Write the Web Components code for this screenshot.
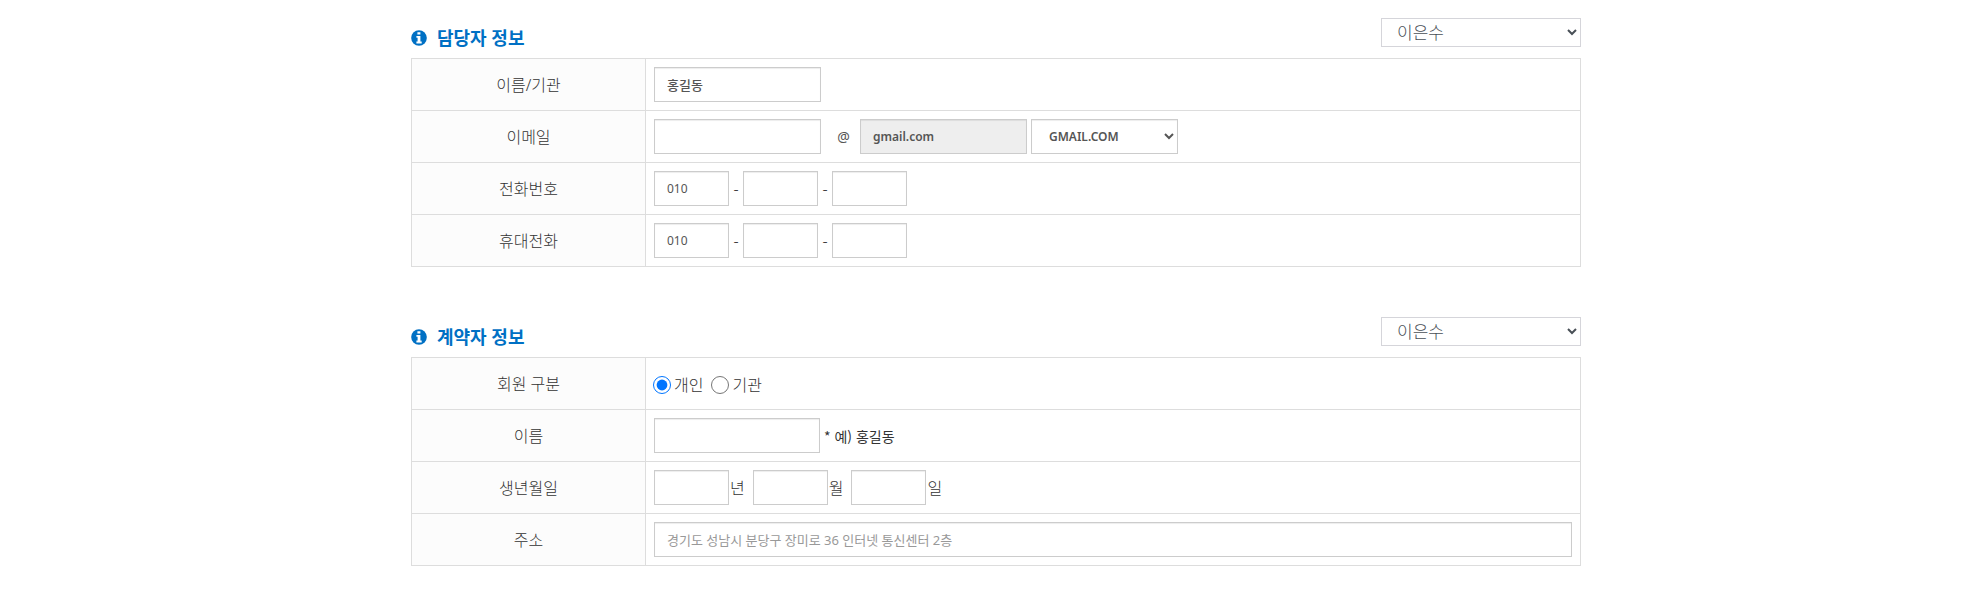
<!DOCTYPE html>
<html lang="ko">
<head>
<meta charset="utf-8">
<meta name="viewport" content="width=device-width, initial-scale=1">
<title>담당자 / 계약자 정보</title>
<style>
body {
  margin: 0;
  padding: 18px 0 40px 22px;
  background: #fff;
  color: #333;
  font: 16px/24px "Noto Sans", "Noto Sans CJK KR", sans-serif;
}
</style>
</head>
<body>
<contract-page></contract-page>

<script>
const controls = `
  *, *::before, *::after { box-sizing: border-box; }
  input, select { font-family: inherit; margin: 0; }
  input[type="text"], select {
    height: 35px;
    border: 1px solid #ccc;
    border-radius: 0;
    background-color: #fff;
    box-shadow: inset 0 1px 1px rgba(0, 0, 0, .075);
    color: #555;
    font-size: 13px;
    outline: 0;
  }
  input[type="text"] { width: 167px; padding: 0 12px; }
  input::placeholder { color: #999; opacity: 1; }
  input.short { width: 75px; font-size: 12px; }
`;

function define(name, markup, setup) {
  const template = document.createElement('template');
  template.innerHTML = markup;
  customElements.define(name, class extends HTMLElement {
    constructor() {
      super();
      this.attachShadow({ mode: 'open' }).append(template.content.cloneNode(true));
    }
    connectedCallback() {
      if (setup) setup(this, this.shadowRoot);
    }
  });
}

define('info-icon', `
  <style>
    :host { display: block; width: 16px; height: 16px; }
    svg { display: block; width: 100%; height: 100%; }
  </style>
  <svg viewBox="0 0 16 16" aria-hidden="true">
    <circle cx="8" cy="8" r="7.8" fill="#0070c4"/>
    <path fill="#fff" d="M6.4 2.2h3v2.4h-3zM5.4 6h4v5.6h1.3v1.8H5.4v-1.8h1.2V7.8H5.4z"/>
  </svg>
`);

define('person-select', `
  <style>${controls}
    :host { display: block; width: 200px; }
    select { display: block; width: 100%; height: 29px; padding: 0 0 0 11px; font-size: 17px; font-weight: 300; border-color: #d5d5da; box-shadow: none; color: #495057; }
  </style>
  <select><option>이은수</option></select>
`, (host, root) => root.querySelector('select').setAttribute('aria-label', host.getAttribute('label')));

define('info-section', `
  <style>
    :host { display: block; }
    header { display: flex; justify-content: space-between; align-items: flex-start; height: 40px; }
    .title { display: flex; align-items: center; gap: 10px; height: 40px; color: #0070c4; }
    h2 { margin: 0; font-size: 18px; line-height: 38px; font-weight: 700; }
  </style>
  <section>
    <header>
      <div class="title"><info-icon></info-icon><h2><slot name="title"></slot></h2></div>
      <slot name="picker"></slot>
    </header>
    <slot></slot>
  </section>
`);

define('phone-fields', `
  <style>${controls}
    :host { display: flex; align-items: center; }
    span { width: 14px; text-align: center; }
  </style>
  <input class="short" type="text" value="010"><span>-</span>
  <input class="short" type="text"><span>-</span>
  <input class="short" type="text">
`, (host, root) => root.querySelectorAll('input').forEach((input, i) =>
  input.setAttribute('aria-label', host.getAttribute('label') + ' ' + (i + 1))));

const tableStyle = `
  :host { display: block; }
  table { width: 100%; border-collapse: collapse; table-layout: fixed; }
  tr { height: 52px; }
  th, td { border: 1px solid #ddd; padding: 0 8px; }
  th { width: 234px; background: #fcfcfc; font-weight: 300; text-align: center; }
  td { font-weight: 300; }
  .row { display: flex; align-items: center; }
`;

define('manager-form', `
  <style>${controls}${tableStyle}
    .name { font-weight: 500; }
    input.domain, select.provider { font-size: 12px; font-weight: 600; }
    .at { width: 39px; padding-left: 6px; text-align: center; font-size: 14px; font-weight: 400; color: #555; }
    .domain:disabled { background: #eee; }
    .provider { width: 147px; margin-left: 4px; padding: 0 0 0 13px; }
  </style>
  <table>
    <tr><th scope="row"><label for="name">이름/기관</label></th>
      <td><div class="row"><input class="name" id="name" type="text" value="홍길동"></div></td></tr>
    <tr><th scope="row"><label for="email">이메일</label></th>
      <td><div class="row"><input id="email" type="text"><span class="at">@</span><input class="domain" type="text" value="gmail.com" aria-label="이메일 도메인" disabled><select class="provider" aria-label="도메인 선택"><option>GMAIL.COM</option></select></div></td></tr>
    <tr><th scope="row">전화번호</th><td><phone-fields label="전화번호"></phone-fields></td></tr>
    <tr><th scope="row">휴대전화</th><td><phone-fields label="휴대전화"></phone-fields></td></tr>
  </table>
`);

define('contractor-form', `
  <style>${controls}${tableStyle}
    input[type="radio"] { width: 18px; height: 18px; margin: 0 3px 0 0; }
    td.kind-cell { padding-left: 7px; }
    .kind { gap: 8px; padding-top: 2px; }
    .kind label { display: flex; align-items: center; }
    #name { width: 166px; }
    .note { padding-left: 4px; font-family: "Noto Sans CJK KR", sans-serif; font-size: 14px; font-weight: 400; }
    .birth { gap: 8px; }
    .birth label { display: flex; align-items: center; gap: 1px; }
    #address { width: 100%; }
  </style>
  <table>
    <tr><th scope="row">회원 구분</th>
      <td class="kind-cell"><div class="row kind"><label><input type="radio" name="kind" checked>개인</label><label><input type="radio" name="kind">기관</label></div></td></tr>
    <tr><th scope="row"><label for="name">이름</label></th>
      <td><div class="row"><input id="name" type="text"><span class="note">* 예) 홍길동</span></div></td></tr>
    <tr><th scope="row">생년월일</th>
      <td><div class="row birth"><label><input class="short" type="text">년</label><label><input class="short" type="text">월</label><label><input class="short" type="text">일</label></div></td></tr>
    <tr><th scope="row"><label for="address">주소</label></th>
      <td><div class="row"><input id="address" type="text" placeholder="경기도 성남시 분당구 장미로 36 인터넷 통신센터 2층"></div></td></tr>
  </table>
`);

define('contract-page', `
  <style>
    :host { display: block; }
    main { display: grid; gap: 50px; max-width: 1170px; margin: 0 auto; }
  </style>
  <main>
    <info-section>
      <span slot="title">담당자 정보</span>
      <person-select slot="picker" label="담당자 선택"></person-select>
      <manager-form></manager-form>
    </info-section>
    <info-section>
      <span slot="title">계약자 정보</span>
      <person-select slot="picker" label="계약자 선택"></person-select>
      <contractor-form></contractor-form>
    </info-section>
  </main>
`);
</script>
</body>
</html>
